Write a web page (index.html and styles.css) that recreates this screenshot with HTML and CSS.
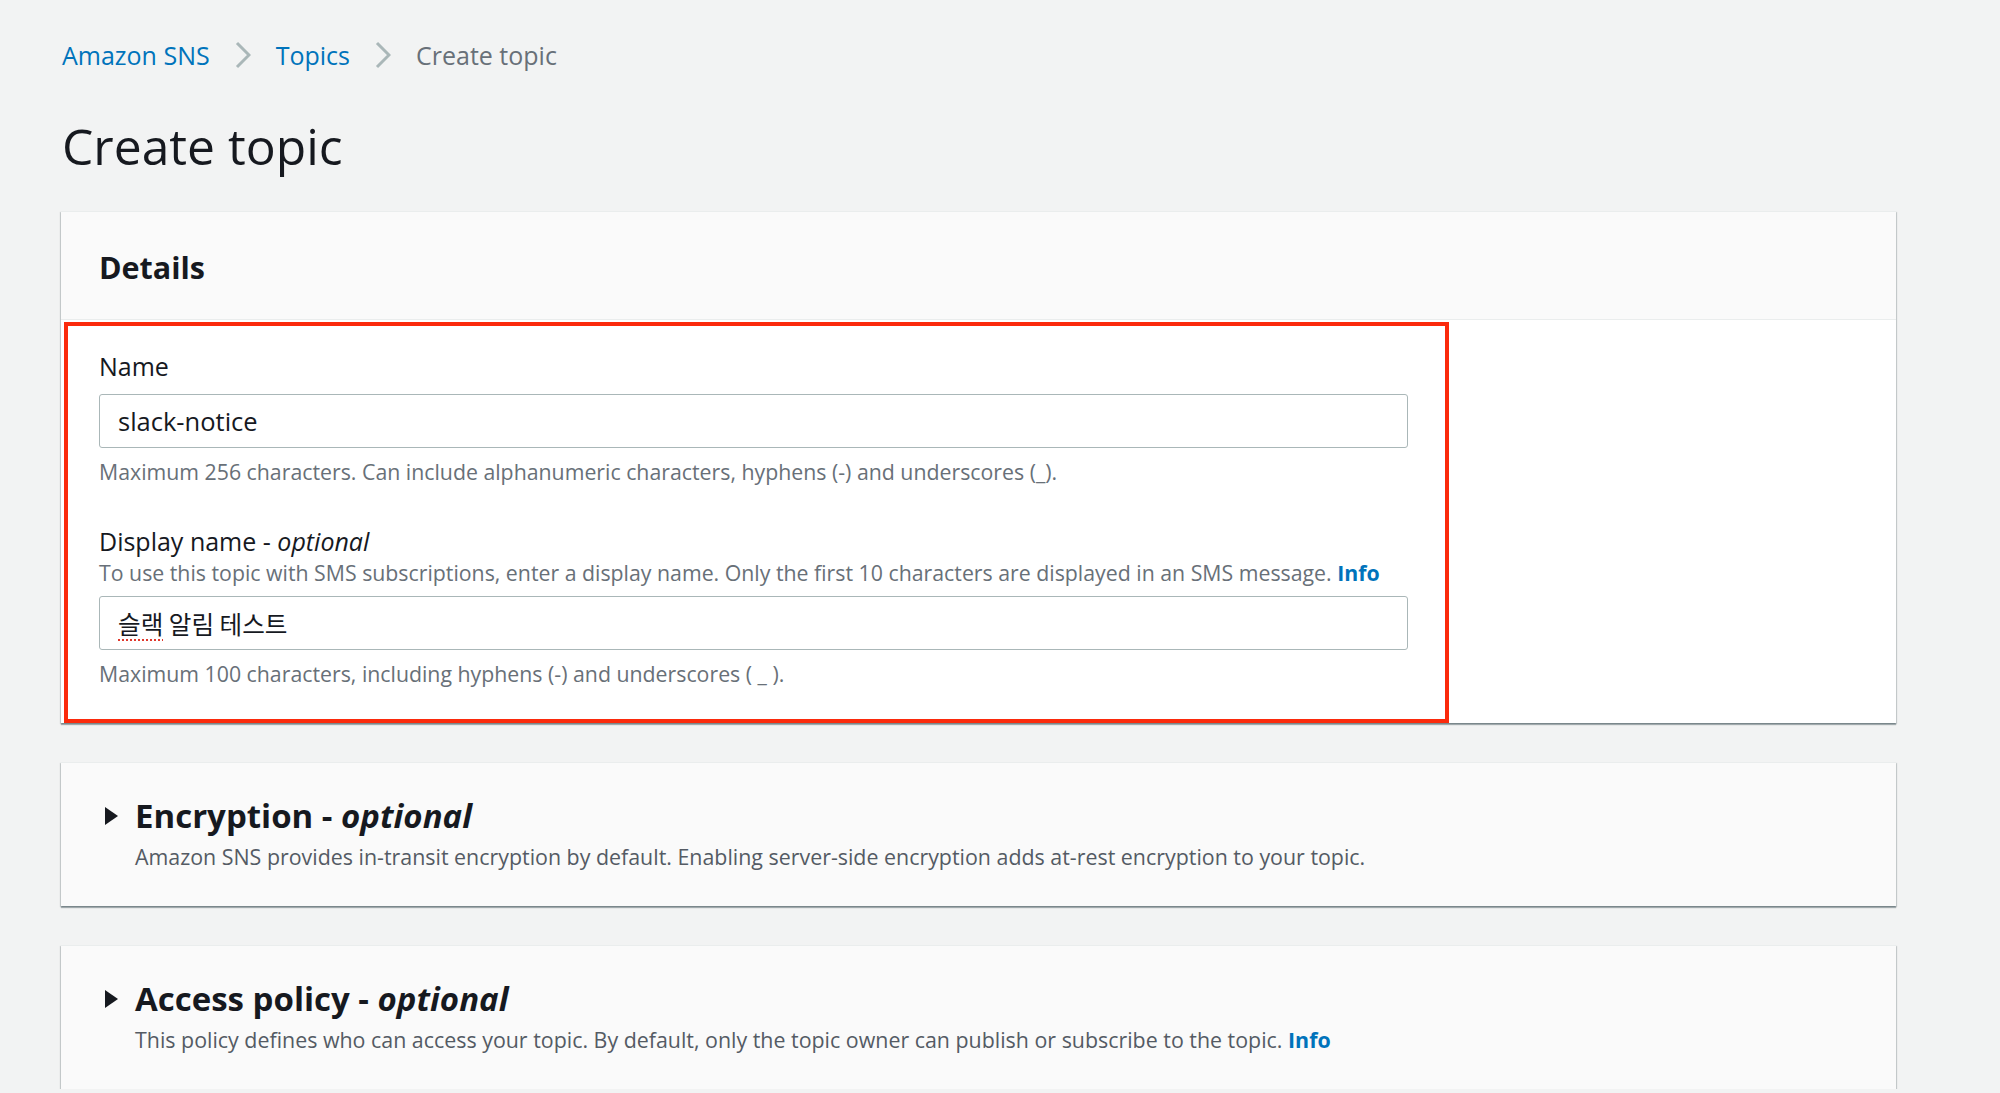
FILE: index.html
```html
<!DOCTYPE html>
<html lang="en">
<head>
<meta charset="utf-8">
<title>Create topic</title>
<link rel="stylesheet" href="styles.css">
</head>
<body>
<div class="page">
  <nav class="crumbs">
    <a class="crumb-link">Amazon SNS</a>
    <svg class="chev" viewBox="0 0 16 28" width="16" height="28"><polyline points="2,2 14,14 2,26" fill="none" stroke="#aab7b8" stroke-width="3"/></svg>
    <a class="crumb-link">Topics</a>
    <svg class="chev" viewBox="0 0 16 28" width="16" height="28"><polyline points="2,2 14,14 2,26" fill="none" stroke="#aab7b8" stroke-width="3"/></svg>
    <span class="crumb-current">Create topic</span>
  </nav>

  <h1 class="page-title">Create topic</h1>

  <section class="card">
    <div class="card-header"><h2 class="card-title card-title-details">Details</h2></div>
    <div class="card-body">
      <div class="highlight">
        <div class="field">
          <div class="label">Name</div>
          <div class="input">slack-notice</div>
          <p class="hint">Maximum 256 characters. Can include alphanumeric characters, hyphens (-) and underscores (_).</p>
        </div>
        <div class="field field-second">
          <div class="label">Display name - <i>optional</i></div>
          <p class="desc">To use this topic with SMS subscriptions, enter a display name. Only the first 10 characters are displayed in an SMS message. <a class="info">Info</a></p>
          <div class="input input-kr"><span class="spell">슬랙</span> 알림 테스트</div>
          <p class="hint">Maximum 100 characters, including hyphens (-) and underscores ( _ ).</p>
        </div>
      </div>
    </div>
  </section>

  <section class="card card-collapsed">
    <div class="expander">
      <svg class="caret" viewBox="0 0 13 18" width="13" height="18"><polygon points="0,0 13,9 0,18" fill="#16191f"/></svg>
      <div class="expander-text">
        <h2 class="card-title">Encryption - <i>optional</i></h2>
        <p class="exp-desc">Amazon SNS provides in-transit encryption by default. Enabling server-side encryption adds at-rest encryption to your topic.</p>
      </div>
    </div>
  </section>

  <section class="card card-collapsed">
    <div class="expander">
      <svg class="caret" viewBox="0 0 13 18" width="13" height="18"><polygon points="0,0 13,9 0,18" fill="#16191f"/></svg>
      <div class="expander-text">
        <h2 class="card-title">Access policy - <i>optional</i></h2>
        <p class="exp-desc">This policy defines who can access your topic. By default, only the topic owner can publish or subscribe to the topic. <a class="info">Info</a></p>
      </div>
    </div>
  </section>
</div>
</body>
</html>
```

FILE: styles.css
```css
* { box-sizing: border-box; }

html, body {
  margin: 0;
  padding: 0;
  background: #f2f3f3;
}

body {
  font-family: "Open Sans", "Noto Sans CJK KR", sans-serif;
  color: #16191f;
  overflow: hidden;
}

.page {
  width: 1896px;
  padding: 39px 0 0 61px;
}

.crumbs {
  display: flex;
  align-items: center;
  height: 32px;
  font-size: 25px;
  line-height: 32px;
  padding-left: 1px;
}

.crumb-link {
  color: #0073bb;
}

.crumb-current {
  color: #687078;
}

.chev {
  margin: 0 25px 0 25px;
  display: block;
}

.page-title {
  margin: 47px 0 0 0;
  font-size: 49.8px;
  line-height: 56px;
  font-weight: 400;
  padding-left: 1px;
  color: #16191f;
}

.card {
  margin-top: 37px;
  background: #fff;
  border-top: 1px solid #eaeded;
  box-shadow: 0 2px 1px 0 rgba(0, 28, 36, 0.3), 1px 1px 1px 0 rgba(0, 28, 36, 0.15), -1px 1px 1px 0 rgba(0, 28, 36, 0.15);
}

.card-header {
  background: #fafafa;
  padding: 35px 38px 32px 38px;
  border-bottom: 1px solid #eaeded;
}

.card-title {
  margin: 0;
  font-size: 33px;
  line-height: 40px;
  font-weight: 700;
  color: #16191f;
}

.card-title-details {
  font-size: 30.5px;
}

.card-body {
  padding: 2px 0 0 3px;
}

.highlight {
  width: 1385px;
  border: 4px solid #fb2a0c;
  padding: 23px 0 30px 31px;
}

.field {
  width: 1309px;
}

.field-second {
  margin-top: 37px;
}

.label {
  font-size: 25px;
  line-height: 34px;
}

.label i {
  font-style: italic;
}

.input {
  margin-top: 11px;
  height: 54px;
  border: 1px solid #aab7b8;
  border-radius: 3px;
  background: #fff;
  padding: 0 18px;
  font-size: 25.5px;
  line-height: 52px;
  color: #16191f;
}

.input-kr {
  margin-top: 8px;
  font-family: "Noto Sans CJK KR", sans-serif;
  font-size: 24.6px;
}

.spell {
  text-decoration: underline dotted #e0382c;
  text-decoration-thickness: 2px;
  text-underline-offset: 5px;
}

.hint, .desc {
  margin: 0;
  font-size: 21.3px;
  line-height: 30px;
  color: #687078;
}

.hint {
  margin-top: 9px;
}

.info {
  color: #0073bb;
  font-weight: 700;
}

.card-collapsed {
  background: #fafafa;
  margin-top: 39px;
}

.expander {
  display: flex;
  align-items: flex-start;
  padding: 33px 38px 34px 44px;
}

.caret {
  display: block;
  margin-top: 11px;
  flex: none;
}

.expander-text {
  margin-left: 17px;
}

.exp-desc {
  margin: 6px 0 0 0;
  font-size: 21.4px;
  line-height: 30px;
  color: #545b64;
}
```
